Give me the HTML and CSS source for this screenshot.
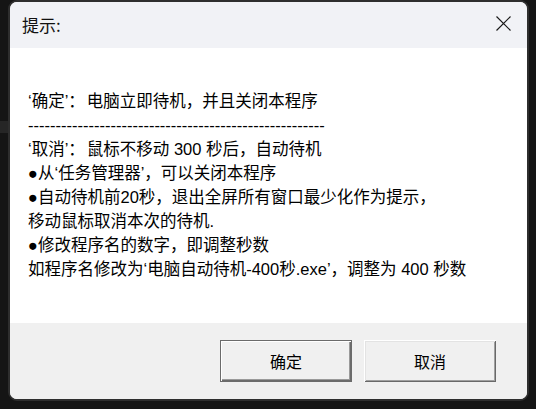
FILE: index.html
```html
<!DOCTYPE html>
<html lang="zh-CN">
<head>
<meta charset="utf-8">
<title>提示</title>
<link rel="stylesheet" href="styles.css">
</head>
<body>
<div class="backdrop-band"></div>
<div class="dialog">
  <div class="titlebar">
    <span class="title">提示:</span>
    <svg class="close" width="15" height="15" viewBox="0 0 15 15" aria-hidden="true">
      <path d="M0.5 0.5 L14.5 14.5 M14.5 0.5 L0.5 14.5" stroke="#1a1a1a" stroke-width="1.15" fill="none"/>
    </svg>
  </div>
  <div class="content">
    <div class="line">‘确定’<span class="colon">：</span>电脑立即待机，并且关闭本程序</div>
    <div class="line">------------------------------------------------------</div>
    <div class="line">‘取消’<span class="colon">：</span>鼠标不移动 300 秒后，自动待机</div>
    <div class="line">●从‘任务管理器’，可以关闭本程序</div>
    <div class="line">●自动待机前20秒，退出全屏所有窗口最少化作为提示，</div>
    <div class="line">移动鼠标取消本次的待机.</div>
    <div class="line">●修改程序名的数字，即调整秒数</div>
    <div class="line">如程序名修改为‘电脑自动待机-400秒.exe’，调整为 400 秒数</div>
  </div>
  <div class="footer">
    <button class="btn btn-default">确定</button>
    <button class="btn">取消</button>
  </div>
</div>
</body>
</html>
```
FILE: styles.css
```css
html, body {
  margin: 0;
  padding: 0;
}
body {
  width: 536px;
  height: 409px;
  background: #151515;
  overflow: hidden;
  position: relative;
  font-family: "Liberation Sans", "Noto Sans CJK SC", sans-serif;
}
.backdrop-band {
  position: absolute;
  left: 0;
  top: 121px;
  width: 8px;
  height: 12px;
  background: #262626;
}
.dialog {
  position: relative;
  margin-left: 8px;
  width: 521px;
  height: 401px;
  box-sizing: border-box;
  border: 2px solid #2e2e2e;
  border-radius: 9px;
  overflow: hidden;
  display: flex;
  flex-direction: column;
  background: #ffffff;
}
.titlebar {
  height: 46px;
  flex: none;
  background: #f1f2f6;
  display: flex;
  align-items: center;
  justify-content: space-between;
  padding: 0 16px 0 12px;
}
.title {
  font-family: "Noto Sans CJK SC", sans-serif;
  font-size: 17px;
  color: #111;
  margin-top: -1px;
}
.close {
  display: block;
  margin-top: -3px;
}
.content {
  flex: 1;
  padding: 41px 0 0 18px;
  font-size: 16.5px;
  line-height: 24px;
  color: #000;
}
.line {
  white-space: pre;
  height: 24px;
}
.colon {
  margin-right: 2px;
}
.footer {
  flex: none;
  height: 76px;
  box-sizing: border-box;
  background: #f0f0f0;
  display: flex;
  justify-content: flex-end;
  align-items: flex-start;
  gap: 12px;
  padding: 17px 31px 0 0;
}
.btn {
  width: 132px;
  height: 42px;
  margin: 0;
  padding: 0;
  background: #f0f0f0;
  font-family: "Noto Sans CJK SC", sans-serif;
  font-size: 16px;
  color: #000;
  border: none;
  box-shadow: inset 1px 1px #ffffff, inset -1px -1px #696969, inset 2px 2px #e3e3e3, inset -2px -2px #a0a0a0;
}
.btn-default {
  border: 1px solid #6b6b6b;
  box-shadow: inset 1px 1px #ffffff, inset -1px -1px #6b6b6b, inset -2px -2px #9a9a9a;
}
```
